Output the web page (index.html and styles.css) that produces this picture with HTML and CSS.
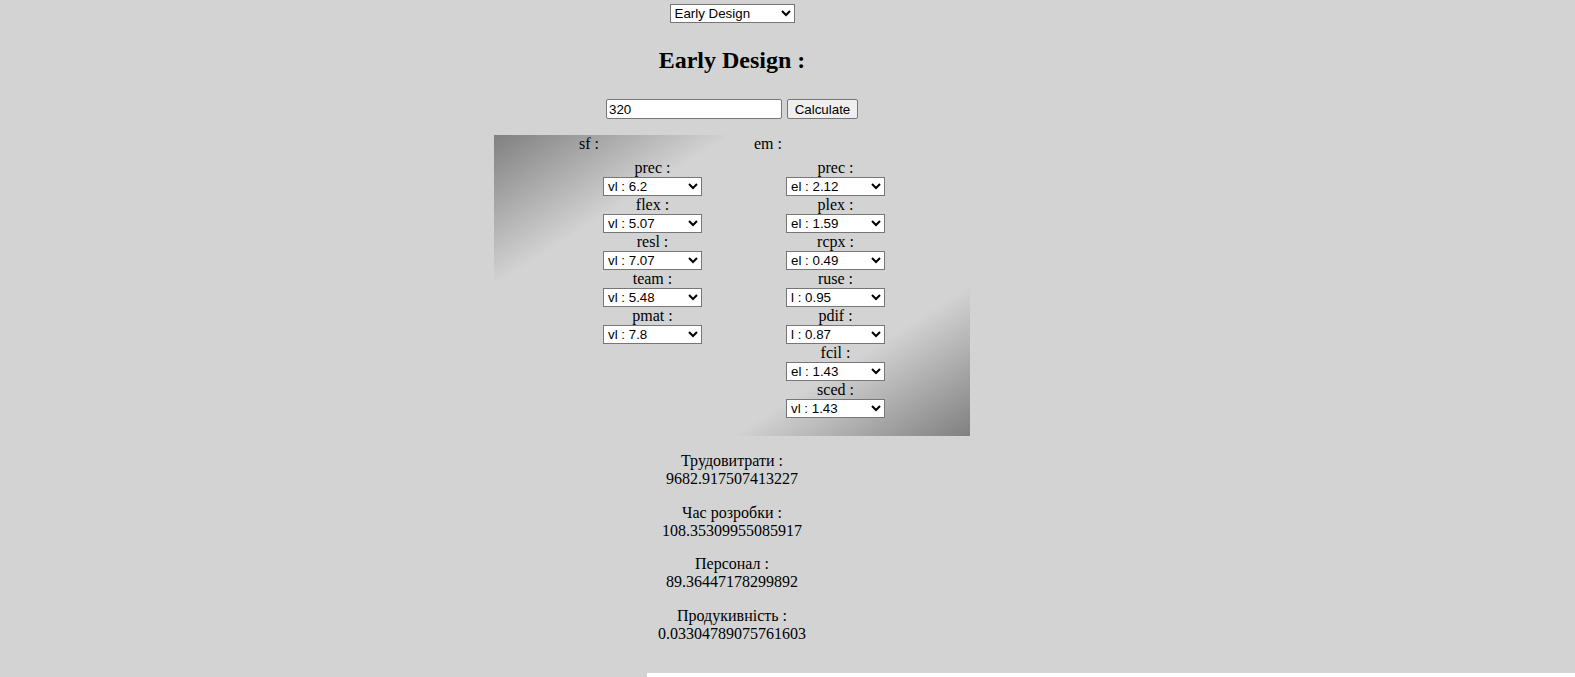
FILE: index.html
```html
<!DOCTYPE html>
<html lang="uk">
<head>
<meta charset="utf-8">
<title>COCOMO II</title>
<link rel="stylesheet" href="styles.css">
</head>
<body>
<div class="app">
  <select class="model-select">
    <option selected>Early Design</option>
    <option>Post Architecture</option>
  </select>
  <h2 class="title">Early Design :</h2>
  <div class="calc-row">
    <input class="size-input" type="text" value="320">
    <button class="calc-btn" type="button">Calculate</button>
  </div>
  <div class="params">
    <div class="group group-sf">
      <div class="group-title">sf :</div>
      <div class="fields fields-sf">
        <div class="field"><div class="field-label">prec :</div><select class="field-select"><option selected>vl : 6.2</option><option>l : 4.96</option></select></div>
        <div class="field"><div class="field-label">flex :</div><select class="field-select"><option selected>vl : 5.07</option><option>l : 4.05</option></select></div>
        <div class="field"><div class="field-label">resl :</div><select class="field-select"><option selected>vl : 7.07</option><option>l : 5.65</option></select></div>
        <div class="field"><div class="field-label">team :</div><select class="field-select"><option selected>vl : 5.48</option><option>l : 4.38</option></select></div>
        <div class="field"><div class="field-label">pmat :</div><select class="field-select"><option selected>vl : 7.8</option><option>l : 6.24</option></select></div>
      </div>
    </div>
    <div class="group group-em">
      <div class="group-title">em :</div>
      <div class="fields fields-em">
        <div class="field"><div class="field-label">prec :</div><select class="field-select"><option selected>el : 2.12</option><option>vl : 0.49</option></select></div>
        <div class="field"><div class="field-label">plex :</div><select class="field-select"><option selected>el : 1.59</option><option>vl : 0.6</option></select></div>
        <div class="field"><div class="field-label">rcpx :</div><select class="field-select"><option selected>el : 0.49</option><option>vl : 0.6</option></select></div>
        <div class="field"><div class="field-label">ruse :</div><select class="field-select"><option selected>l : 0.95</option><option>n : 1</option></select></div>
        <div class="field"><div class="field-label">pdif :</div><select class="field-select"><option selected>l : 0.87</option><option>n : 1</option></select></div>
        <div class="field"><div class="field-label">fcil :</div><select class="field-select"><option selected>el : 1.43</option><option>vl : 1.3</option></select></div>
        <div class="field"><div class="field-label">sced :</div><select class="field-select"><option selected>vl : 1.43</option><option>l : 1.14</option></select></div>
      </div>
    </div>
  </div>
  <div class="results">
    <div class="result"><div>Трудовитрати :</div><div>9682.917507413227</div></div>
    <div class="result"><div>Час розробки :</div><div>108.35309955085917</div></div>
    <div class="result"><div>Персонал :</div><div>89.36447178299892</div></div>
    <div class="result"><div>Продукивність :</div><div>0.03304789075761603</div></div>
  </div>
</div>
<div class="bottom-strip"></div>
</body>
</html>
```

FILE: styles.css
```css
html, body {
  margin: 0;
  padding: 0;
}
body {
  background: lightgray;
  font-family: "Liberation Serif", "Times New Roman", serif;
  font-size: 16px;
  color: #000;
  overflow: hidden;
}
.app {
  width: 1464px;
  padding-top: 4px;
  text-align: center;
}
select, input, button {
  font-family: "Liberation Sans", Arial, sans-serif;
  font-size: 13.33px;
  color: #000;
  box-sizing: border-box;
  margin: 0;
}
.model-select {
  display: block;
  margin: 0 auto;
  width: 125px;
  height: 19px;
  background: #fff;
  border: 1px solid #767676;
}
.title {
  font-size: 24px;
  font-weight: bold;
  line-height: 28px;
  margin: 23px 0 25px;
}
.calc-row {
  display: flex;
  justify-content: center;
  gap: 5px;
}
.size-input {
  width: 176px;
  height: 20px;
  padding: 1px 2px;
  border: 1px solid #767676;
  border-radius: 2px;
  background: #fff;
}
.calc-btn {
  width: 71px;
  height: 20px;
  padding: 0 6px;
  border: 1px solid #767676;
  border-radius: 2px;
  background: #efefef;
}
.params {
  display: flex;
  width: 476px;
  box-sizing: border-box;
  margin: 16px auto 0;
  padding: 0 0 18px 85px;
  text-align: left;
  background: linear-gradient(to bottom right, gray 0%, lightgray 25%, lightgray 75%, gray 100%);
}
.group-sf {
  width: 175px;
}
.group-title {
  line-height: 18px;
}
.fields {
  display: flex;
  flex-direction: column;
  margin-top: 6px;
  width: 99px;
  text-align: center;
}
.fields-sf {
  margin-left: 24px;
}
.fields-em {
  margin-left: 32px;
}
.field {
  display: flex;
  flex-direction: column;
}
.field-label {
  line-height: 18px;
  white-space: nowrap;
}
.field-select {
  width: 99px;
  height: 19px;
  background: #fff;
  border: 1px solid #767676;
}
.results {
  display: flex;
  flex-direction: column;
  gap: 15.6px;
  padding-top: 16px;
  line-height: 18px;
}
.bottom-strip {
  margin: 30px 0 0 647px;
  height: 20px;
  background: #fff;
}
```
